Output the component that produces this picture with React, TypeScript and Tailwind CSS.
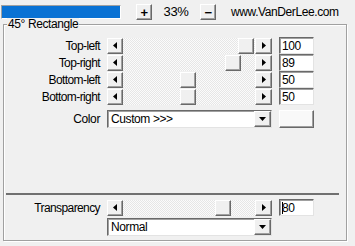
import React from "react";

const font = { fontFamily: '"Liberation Sans", Arial, sans-serif' };

function Arrow({ dir }: { dir: "left" | "right" | "down" }) {
  if (dir === "down") {
    return (
      <svg width="7" height="4" viewBox="0 0 7 4">
        <path d="M0 0h7L3.5 4z" fill="#000" />
      </svg>
    );
  }
  return (
    <svg width="4" height="7" viewBox="0 0 4 7">
      {dir === "left" ? <path d="M4 0v7L0 3.5z" fill="#000" /> : <path d="M0 0v7l4-3.5z" fill="#000" />}
    </svg>
  );
}

// raised win-classic button face
const raised =
  "bg-[#f0f0f0] border border-t-white border-l-white border-r-[#696969] border-b-[#696969] shadow-[inset_-1px_-1px_0_#a0a0a0]";
const sunken =
  "bg-white border border-t-[#696969] border-l-[#696969] border-r-[#e3e3e3] border-b-[#e3e3e3] shadow-[inset_1px_1px_0_#a0a0a0]";

function Slider({ value }: { value: number }) {
  return (
    <div className="flex h-[16px] w-[165px]">
      <div className={`${raised} flex w-[16px] shrink-0 items-center justify-center`}>
        <Arrow dir="left" />
      </div>
      <div className="relative flex-1 bg-[repeating-conic-gradient(#e6e6e6_0_25%,#fbfbfb_0_50%)] bg-[length:2px_2px]">
        <div className={`${raised} absolute top-0 h-[16px] w-[16px]`} style={{ left: Math.round(value * 1.15) }} />
      </div>
      <div className={`${raised} flex w-[17px] shrink-0 items-center justify-center`}>
        <Arrow dir="right" />
      </div>
    </div>
  );
}

function Field({ value, caret }: { value: string; caret?: boolean }) {
  return (
    <div className={`${sunken} flex h-[17px] w-[35px] items-center pl-[2px] leading-none`}>
      {caret && <span className="mr-[-1px] h-[12px] w-[1px] bg-black" />}
      {value}
    </div>
  );
}

function Dropdown({ text }: { text: string }) {
  return (
    <div className={`${sunken} flex h-[18px] w-[165px] items-center`}>
      <span className="flex-1 pl-[3px] leading-none">{text}</span>
      <div className={`${raised} flex h-[16px] w-[17px] items-center justify-center`}>
        <Arrow dir="down" />
      </div>
    </div>
  );
}

function Row({ label, value }: { label: string; value: number }) {
  return (
    <div className="flex h-[17px] items-center">
      <div className="w-[97px] pr-[1px] text-right leading-none tracking-[-0.6px]">{label}</div>
      <div className="ml-[6px]">
        <Slider value={value} />
      </div>
      <div className="ml-[7px]">
        <Field value={String(value)} />
      </div>
    </div>
  );
}

export default function App() {
  const corners = [
    { label: "Top-left", value: 100 },
    { label: "Top-right", value: 89 },
    { label: "Bottom-left", value: 50 },
    { label: "Bottom-right", value: 50 },
  ];

  return (
    <div className="h-[246px] w-[355px] overflow-hidden bg-[#f0f0f0] text-[12px] tracking-[-0.4px] text-black" style={font}>
      {/* top bar */}
      <div className="flex h-[24px] items-center pl-[1px]">
        <div className="h-[14px] w-[120px] border border-t-[#a0a0a0] border-l-[#a0a0a0] border-r-white border-b-white bg-[#0a72d4]" />
        <div className={`${raised} ml-[15px] flex h-[16px] w-[16px] items-center justify-center text-[13px] font-bold leading-none`}>+</div>
        <div className="w-[48px] text-center text-[13px]">33%</div>
        <div className={`${raised} flex h-[16px] w-[16px] items-center justify-center text-[13px] font-bold leading-none`}>−</div>
        <div className="ml-[15px] text-[12px]">www.VanDerLee.com</div>
      </div>

      {/* group box */}
      <div className="relative ml-[3px] h-[217px] w-[344px] border border-[#a0a0a0] shadow-[inset_1px_1px_0_#fff,1px_1px_0_#fff]">
        <div className="absolute left-[3px] top-[-7px] bg-[#f0f0f0] px-[1px] leading-none">45° Rectangle</div>

        <div className="flex flex-col pt-[12px]">
          {corners.map((c) => (
            <Row key={c.label} label={c.label} value={c.value} />
          ))}
        </div>

        <div className="mt-[5px] flex items-center">
          <div className="w-[97px] pr-[1px] text-right leading-none">Color</div>
          <div className="ml-[6px]">
            <Dropdown text="Custom >>>" />
          </div>
          <div className={`${raised} ml-[7px] h-[18px] w-[35px] bg-[#f9f9f9]`} />
        </div>

        <div className="ml-[2px] mt-[65px] h-[2px] w-[333px] bg-[#707070]" />

        <div className="mt-[4px] flex h-[17px] items-center">
          <div className="w-[97px] pr-[1px] text-right leading-none tracking-[-0.6px]">Transparency</div>
          <div className="ml-[6px]">
            <Slider value={80} />
          </div>
          <div className="ml-[7px]">
            <Field value="80" caret />
          </div>
        </div>
        <div className="ml-[103px] mt-[2px]">
          <Dropdown text="Normal" />
        </div>
      </div>
    </div>
  );
}
